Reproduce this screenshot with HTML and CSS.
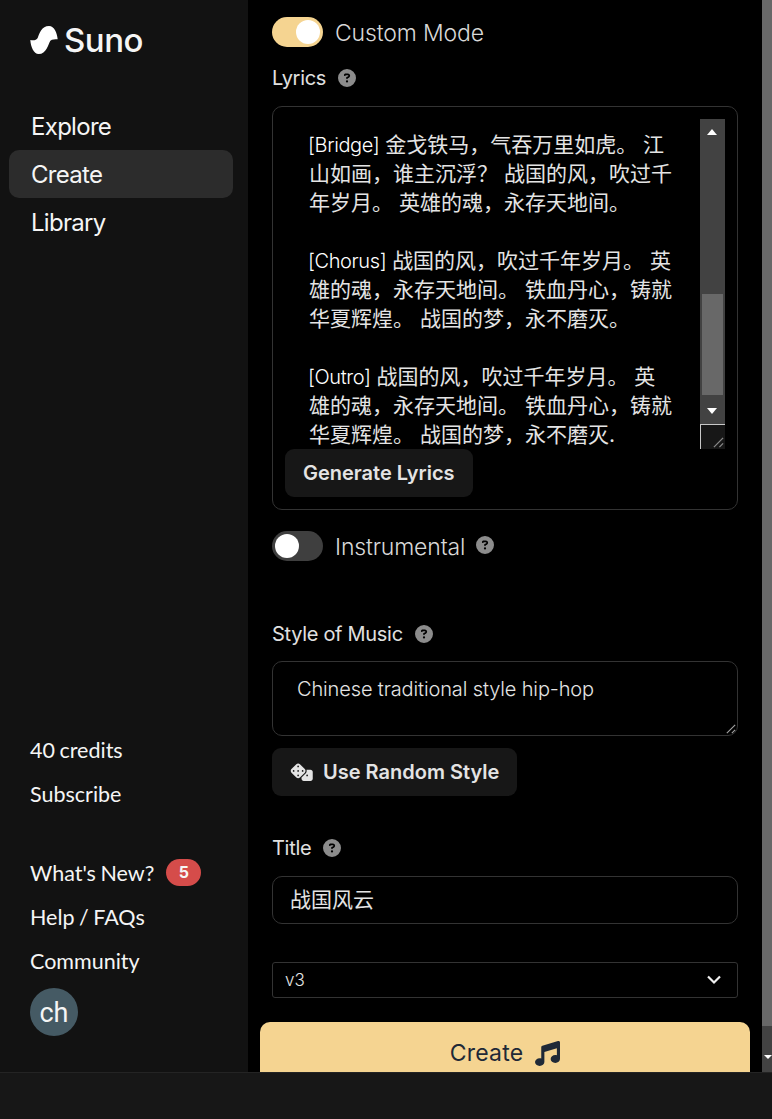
FILE: index.html
```html
<!DOCTYPE html>
<html lang="en">
<head>
  <meta charset="UTF-8" />
  <meta name="viewport" content="width=device-width, initial-scale=1.0" />
  <title>Suno - Create</title>
  <link rel="stylesheet" href="styles.css">
</head>
<body>
  <div class="app">
    <nav class="sidebar">
      <div class="logo">
        <svg class="logo-mark" viewBox="0 0 82 84"><path d="M0 42C8 44 18 44 22 36C27 22 34 0 56 0C72 0 80 20 82 40C74 40 66 40 60 44C54 54 48 84 25 84C10 84 1 62 0 42Z"/></svg>
        <span>Suno</span>
      </div>
      <ul class="main-nav">
        <li>Explore</li>
        <li class="active">Create</li>
        <li>Library</li>
      </ul>
      <div class="side-bottom">
        <p class="side-link">40 credits</p>
        <p class="side-link">Subscribe</p>
        <p class="side-link whats-new">What's New? <span class="badge">5</span></p>
        <p class="side-link">Help / FAQs</p>
        <p class="side-link">Community</p>
        <div class="avatar">ch</div>
      </div>
    </nav>

    <main class="content">
      <div class="switch-row first">
        <span class="toggle on"><span class="knob"></span></span>
        <span class="switch-label">Custom Mode</span>
      </div>

      <div class="field-label lyrics-label">Lyrics
        <svg class="help" viewBox="0 0 512 512"><path d="M256 512A256 256 0 1 0 256 0a256 256 0 1 0 0 512zM169.8 165.3c7.9-22.3 29.1-37.3 52.8-37.3h58.3c34.9 0 63.1 28.3 63.1 63.1c0 22.6-12.1 43.5-31.7 54.8L280 264.4c-.2 13-10.9 23.6-24 23.6c-13.3 0-24-10.7-24-24V250.5c0-8.6 4.6-16.5 12.1-20.8l44.3-25.4c4.7-2.7 7.6-7.7 7.6-13.1c0-8.4-6.8-15.1-15.1-15.1H222.6c-3.4 0-6.4 2.1-7.5 5.3l-.4 1.2c-4.4 12.5-18.2 19-30.6 14.6s-19-18.2-14.6-30.6l.4-1.2zM224 352a32 32 0 1 1 64 0 32 32 0 1 1 -64 0z"/></svg>
      </div>
      <div class="lyrics-box">
        <div class="lyrics-area">
          <div class="lyrics-text">
            <p><span class="tag">[Bridge]</span> 金戈铁马，气吞万里如虎。 江<br>山如画，谁主沉浮？ 战国的风，吹过千<br>年岁月。 英雄的魂，永存天地间。</p>
            <p><span class="tag">[Chorus]</span> 战国的风，吹过千年岁月。 英<br>雄的魂，永存天地间。 铁血丹心，铸就<br>华夏辉煌。 战国的梦，永不磨灭。</p>
            <p><span class="tag">[Outro]</span> 战国的风，吹过千年岁月。 英<br>雄的魂，永存天地间。 铁血丹心，铸就<br>华夏辉煌。 战国的梦，永不磨灭.</p>
          </div>
          <div class="area-scroll">
            <div class="area-track">
              <span class="arrow-up"></span>
              <span class="area-thumb"></span>
              <span class="arrow-down"></span>
            </div>
            <div class="area-corner">
              <svg class="grip" viewBox="0 0 12 12"><path d="M1 11L11 1M7 11L11 7"/></svg>
            </div>
          </div>
        </div>
        <button class="btn">Generate Lyrics</button>
      </div>

      <div class="switch-row">
        <span class="toggle"><span class="knob"></span></span>
        <span class="switch-label">Instrumental</span>
        <svg class="help" viewBox="0 0 512 512"><path d="M256 512A256 256 0 1 0 256 0a256 256 0 1 0 0 512zM169.8 165.3c7.9-22.3 29.1-37.3 52.8-37.3h58.3c34.9 0 63.1 28.3 63.1 63.1c0 22.6-12.1 43.5-31.7 54.8L280 264.4c-.2 13-10.9 23.6-24 23.6c-13.3 0-24-10.7-24-24V250.5c0-8.6 4.6-16.5 12.1-20.8l44.3-25.4c4.7-2.7 7.6-7.7 7.6-13.1c0-8.4-6.8-15.1-15.1-15.1H222.6c-3.4 0-6.4 2.1-7.5 5.3l-.4 1.2c-4.4 12.5-18.2 19-30.6 14.6s-19-18.2-14.6-30.6l.4-1.2zM224 352a32 32 0 1 1 64 0 32 32 0 1 1 -64 0z"/></svg>
      </div>

      <div class="field-label style-label">Style of Music
        <svg class="help" viewBox="0 0 512 512"><path d="M256 512A256 256 0 1 0 256 0a256 256 0 1 0 0 512zM169.8 165.3c7.9-22.3 29.1-37.3 52.8-37.3h58.3c34.9 0 63.1 28.3 63.1 63.1c0 22.6-12.1 43.5-31.7 54.8L280 264.4c-.2 13-10.9 23.6-24 23.6c-13.3 0-24-10.7-24-24V250.5c0-8.6 4.6-16.5 12.1-20.8l44.3-25.4c4.7-2.7 7.6-7.7 7.6-13.1c0-8.4-6.8-15.1-15.1-15.1H222.6c-3.4 0-6.4 2.1-7.5 5.3l-.4 1.2c-4.4 12.5-18.2 19-30.6 14.6s-19-18.2-14.6-30.6l.4-1.2zM224 352a32 32 0 1 1 64 0 32 32 0 1 1 -64 0z"/></svg>
      </div>
      <div class="style-box">Chinese traditional style hip-hop
        <svg class="style-grip" viewBox="0 0 12 12"><path d="M1 11L11 1M7 11L11 7"/></svg>
      </div>
      <button class="btn random-btn">
        <svg class="dice" viewBox="0 0 640 512"><path d="M274.9 34.3c-28.1-28.1-73.7-28.1-101.8 0L34.3 173.1c-28.1 28.1-28.1 73.7 0 101.8L173.1 413.7c28.1 28.1 73.7 28.1 101.8 0L413.7 274.9c28.1-28.1 28.1-73.7 0-101.8L274.9 34.3zM200 224a24 24 0 1 1 48 0 24 24 0 1 1 -48 0zM96 200a24 24 0 1 1 0 48 24 24 0 1 1 0-48zM224 376a24 24 0 1 1 0-48 24 24 0 1 1 0 48zM352 200a24 24 0 1 1 0 48 24 24 0 1 1 0-48zM224 120a24 24 0 1 1 0-48 24 24 0 1 1 0 48zm96 328c0 35.3 28.7 64 64 64H576c35.3 0 64-28.7 64-64V256c0-35.3-28.7-64-64-64H461.7c11.6 36 3.1 77-25.4 105.5L320 413.8V448zM480 328a24 24 0 1 1 0 48 24 24 0 1 1 0-48z"/></svg>
        Use Random Style
      </button>

      <div class="field-label title-label">Title
        <svg class="help" viewBox="0 0 512 512"><path d="M256 512A256 256 0 1 0 256 0a256 256 0 1 0 0 512zM169.8 165.3c7.9-22.3 29.1-37.3 52.8-37.3h58.3c34.9 0 63.1 28.3 63.1 63.1c0 22.6-12.1 43.5-31.7 54.8L280 264.4c-.2 13-10.9 23.6-24 23.6c-13.3 0-24-10.7-24-24V250.5c0-8.6 4.6-16.5 12.1-20.8l44.3-25.4c4.7-2.7 7.6-7.7 7.6-13.1c0-8.4-6.8-15.1-15.1-15.1H222.6c-3.4 0-6.4 2.1-7.5 5.3l-.4 1.2c-4.4 12.5-18.2 19-30.6 14.6s-19-18.2-14.6-30.6l.4-1.2zM224 352a32 32 0 1 1 64 0 32 32 0 1 1 -64 0z"/></svg>
      </div>
      <div class="title-input">战国风云</div>

      <div class="version-select">
        <span>v3</span>
        <svg class="chevron" viewBox="0 0 16 12"><path d="M2 2.5L8 8.5L14 2.5"/></svg>
      </div>

      <button class="create-btn">Create
        <svg class="note" viewBox="0 0 512 512"><path d="M499.1 6.3c8.1 6 12.9 15.6 12.9 25.7v72V368c0 44.2-43 80-96 80s-96-35.8-96-80s43-80 96-80c11.2 0 22 1.6 32 4.6V147L192 223.8V432c0 44.2-43 80-96 80s-96-35.8-96-80s43-80 96-80c11.2 0 22 1.6 32 4.6V200 128c0-14.1 9.3-26.6 22.8-30.7l320-96c9.7-2.9 20.2-1.1 28.3 5z"/></svg>
      </button>
    </main>

    <div class="page-scroll">
      <span class="page-thumb"></span>
      <span class="arrow-down page-arrow"></span>
    </div>
  </div>
  <footer class="bottom-bar"></footer>
</body>
</html>
```

FILE: styles.css
```css
* {
  box-sizing: border-box;
}
body {
  margin: 0;
  height: 1119px;
  overflow: hidden;
  display: flex;
  flex-direction: column;
  background: #000000;
  color: #e4e4e4;
  font-family: Inter, "Noto Sans CJK SC", sans-serif;
}
p {
  margin: 0;
}
.app {
  height: 1072px;
  display: flex;
  overflow: hidden;
}
.bottom-bar {
  flex: 1;
  background: #171717;
  border-top: 1px solid #242424;
}

/* sidebar */
.sidebar {
  width: 248px;
  flex-shrink: 0;
  background: #121212;
  display: flex;
  flex-direction: column;
  color: #f5f5f5;
}
.logo {
  display: flex;
  align-items: flex-start;
  gap: 6px;
  padding: 21px 0 0 30px;
  height: 78px;
  font-size: 33px;
  font-weight: 500;
  letter-spacing: -0.5px;
  line-height: 38px;
}
.logo-mark {
  width: 28px;
  height: 28px;
  margin-top: 5px;
  fill: #ffffff;
}
.main-nav {
  list-style: none;
  margin: 24px 0 0 9px;
  padding: 0;
  width: 224px;
}
.main-nav li {
  height: 48px;
  line-height: 50px;
  padding-left: 22px;
  font-size: 24px;
  letter-spacing: -0.7px;
  border-radius: 10px;
}
.main-nav .active {
  background: #2c2c2c;
}
.side-bottom {
  margin-top: auto;
  padding: 0 0 36px 30px;
}
.side-link {
  font-family: Lato, sans-serif;
  font-size: 21.5px;
  word-spacing: -1px;
  line-height: 44px;
  height: 44px;
}
.whats-new {
  margin-top: 35px;
  display: flex;
  align-items: center;
  gap: 12px;
}
.badge {
  width: 35px;
  height: 27px;
  border-radius: 14px;
  background: #d54c4a;
  font-family: Inter, sans-serif;
  font-size: 16px;
  font-weight: 700;
  line-height: 27px;
  text-align: center;
  margin-top: -2px;
}
.avatar {
  width: 48px;
  height: 48px;
  margin-top: 5px;
  border-radius: 50%;
  background: #455a64;
  font-family: Roboto, sans-serif;
  font-size: 27px;
  line-height: 51px;
  text-align: center;
}

/* form column */
.content {
  flex: 1;
  min-width: 0;
  padding: 17px 24px 0;
}
.switch-row {
  display: flex;
  align-items: center;
  height: 30px;
  margin-top: 21px;
}
.switch-row.first {
  margin-top: 0;
}
.toggle {
  width: 51px;
  height: 30px;
  border-radius: 15px;
  background: #3f3f3f;
  padding: 3px;
  flex-shrink: 0;
}
.toggle.on {
  background: #f5d491;
  padding-left: 24px;
}
.knob {
  display: block;
  width: 24px;
  height: 24px;
  border-radius: 50%;
  background: #ffffff;
}
.switch-label {
  margin-left: 12px;
  padding-top: 2px;
  font-size: 23px;
  letter-spacing: -0.15px;
  font-weight: 300;
  color: #d8d8d8;
}
.switch-row .help {
  margin-left: 11px;
  margin-top: -2px;
}
.field-label {
  display: flex;
  align-items: center;
  gap: 12px;
  height: 26px;
  font-size: 20px;
  letter-spacing: -0.3px;
  color: #e0e0e0;
}
.help {
  width: 18px;
  height: 18px;
  fill: #8c8c8c;
  flex-shrink: 0;
}
.lyrics-label {
  margin-top: 18px;
}
.lyrics-box {
  margin-top: 15px;
  height: 404px;
  border: 1px solid #333333;
  border-radius: 10px;
  padding: 12px;
}
.lyrics-area {
  height: 330px;
  display: flex;
  justify-content: space-between;
}
.lyrics-text {
  padding: 11px 0 0 24px;
  height: 330px;
  overflow: hidden;
  font-size: 21px;
  line-height: 29px;
  white-space: nowrap;
}
.lyrics-text p {
  margin-bottom: 29px;
}
.tag {
  margin-left: -1px;
  font-size: 20px;
  line-height: 1;
  letter-spacing: -0.4px;
  font-weight: 300;
  color: #ffffff;
}
.area-scroll {
  width: 25px;
  flex-shrink: 0;
  display: flex;
  flex-direction: column;
}
.area-track {
  height: 305px;
  background: #424242;
  position: relative;
}
.area-thumb {
  position: absolute;
  left: 2px;
  right: 2px;
  top: 175px;
  height: 101px;
  background: #686868;
}
.arrow-up,
.arrow-down {
  position: absolute;
  left: 7px;
  width: 0;
  height: 0;
  border-left: 5.5px solid transparent;
  border-right: 5.5px solid transparent;
}
.arrow-up {
  top: 10px;
  border-bottom: 6px solid #ffffff;
}
.arrow-down {
  bottom: 10px;
  border-top: 6px solid #ffffff;
}
.area-corner {
  flex: 1;
  background: #171717;
  border-top: 1px solid #c8c8c8;
  border-left: 1px solid #c8c8c8;
  position: relative;
}
.grip {
  position: absolute;
  right: 1px;
  bottom: 1px;
  width: 11px;
  height: 11px;
  fill: none;
  stroke: #8a8a8a;
  stroke-width: 1.4;
}
.btn {
  display: flex;
  align-items: center;
  height: 48px;
  padding: 0 18px;
  border: none;
  border-radius: 9px;
  background: #171717;
  color: #e4e4e4;
  font-family: inherit;
  font-size: 20px;
  font-weight: 600;
}
.style-label {
  margin-top: 60px;
}
.style-box {
  position: relative;
  margin-top: 14px;
  height: 75px;
  border: 1px solid #333333;
  border-radius: 10px;
  padding: 13px 24px;
  font-size: 20px;
  letter-spacing: -0.13px;
  font-weight: 300;
  line-height: 28px;
}
.style-grip {
  position: absolute;
  right: 1px;
  bottom: 1px;
  width: 10px;
  height: 10px;
  fill: none;
  stroke: #a0a0a0;
  stroke-width: 1.4;
}
.random-btn {
  margin-top: 12px;
  gap: 10px;
}
.dice {
  width: 23px;
  height: 18px;
  fill: #e4e4e4;
}
.title-label {
  margin-top: 39px;
}
.title-input {
  margin-top: 15px;
  height: 48px;
  border: 1px solid #333333;
  border-radius: 10px;
  padding: 0 17px;
  font-size: 21px;
  line-height: 46px;
}
.version-select {
  margin-top: 38px;
  height: 36px;
  border: 1px solid #333333;
  border-radius: 3px;
  padding: 0 15px 0 12px;
  display: flex;
  align-items: center;
  justify-content: space-between;
  font-size: 17px;
  font-weight: 300;
}
.chevron {
  width: 16px;
  height: 12px;
  fill: none;
  stroke: #f0f0f0;
  stroke-width: 2.2;
}
.create-btn {
  display: flex;
  align-items: center;
  justify-content: center;
  gap: 12px;
  width: 490px;
  height: 62px;
  margin: 24px 0 0 -12px;
  border: none;
  border-radius: 10px;
  background: #f5d491;
  color: #1f2937;
  font-family: inherit;
  font-size: 23px;
  font-weight: 400;
  letter-spacing: 0.2px;
}
.note {
  width: 25px;
  height: 25px;
  fill: #1f2937;
}

/* window scrollbar */
.page-scroll {
  width: 10px;
  flex-shrink: 0;
  background: #424242;
  position: relative;
}
.page-thumb {
  display: block;
  height: 1026px;
  background: #686868;
}
.page-arrow {
  left: 2px;
  bottom: 13px;
  border-left-width: 4px;
  border-right-width: 4px;
  border-top-width: 4px;
}
```
